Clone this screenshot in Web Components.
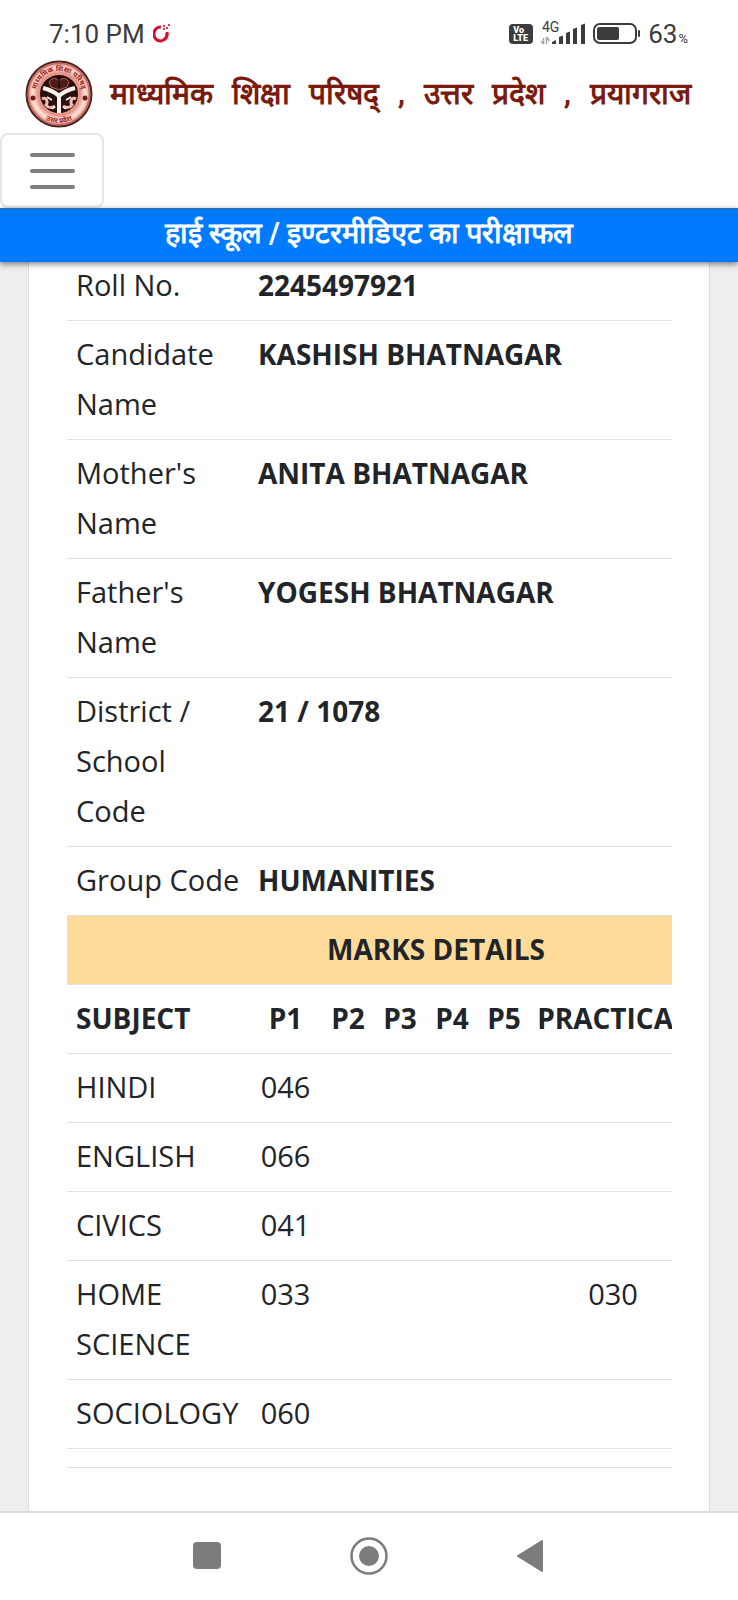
<!DOCTYPE html>
<html lang="hi">
<head>
<meta charset="utf-8">
<meta name="viewport" content="width=device-width, initial-scale=1">
<title>माध्यमिक शिक्षा परिषद्</title>
<style>
    :root {
        --text-color: #212529;
        --status-color: #3c3c3c;
        --brand-color: #7b1b10;
        --primary-color: #007bff;
        --line-color: #dee2e6;
        --page-color: #eeeeee;
        --marks-color: #ffdb99;
        --nav-color: #7c7c7c;
    }

    body {
        margin: 0;
        height: 100vh;
        display: flex;
        flex-direction: column;
        background: var(--page-color);
        color: var(--text-color);
        font-family: "Open Sans", "Noto Sans", sans-serif;
    }

    result-page {
        flex: 1;
        min-height: 0;
    }
</style>
</head>
<body>
    <status-bar></status-bar>
    <board-header></board-header>
    <title-banner>हाई स्कूल / इण्टरमीडिएट का परीक्षाफल</title-banner>
    <result-page><marks-sheet></marks-sheet></result-page>
    <system-nav></system-nav>

<script>
class StatusBar extends HTMLElement {
    constructor() {
        super();
        this.attachShadow({ mode: 'open' });
    }

    connectedCallback() {
        this.shadowRoot.innerHTML = `
            <style>
                :host {
                    display: flex;
                    justify-content: space-between;
                    align-items: center;
                    height: 36px;
                    padding: 16px 50px 6px 49px;
                    background: #fff;
                    color: var(--status-color);
                    font-family: Roboto, sans-serif;
                    font-size: 26px;
                    line-height: 36px;
                }

                .group {
                    display: flex;
                    align-items: center;
                }

                .left { gap: 8px; }
                .right { gap: 7px; }

                svg { display: block; }

                .volte {
                    width: 24px;
                    height: 20px;
                    border-radius: 4px;
                    background: var(--status-color);
                    color: #fff;
                    font: 900 9px/9px Roboto, sans-serif;
                    padding: 2px 0 0 4px;
                    box-sizing: border-box;
                }

                .volte span { display: block; height: 8px; }

                .battery {
                    display: flex;
                    align-items: center;
                    gap: 7px;
                }

                .level {
                    display: flex;
                    align-items: baseline;
                    gap: 1px;
                }

                .percent { font-size: 13px; line-height: 13px; }
            </style>

            <div class="group left">
                <span>7:10 PM</span>
                <svg width="18" height="20" viewBox="0 0 18 20">
                    <path d="M8 3 A6.6 7 0 1 0 14 9" fill="none" stroke="#d4102c" stroke-width="3"/>
                    <path d="M14 8c.5 4-.8 7-4 8" fill="none" stroke="#d4102c" stroke-width="3"/>
                    <path d="M10 1h2v2h-2zM13 3h2v2h-2zM15 0h2v2h-2zM10 4h2v2h-2z" fill="#e0364c"/>
                </svg>
            </div>
            <div class="group right">
                <div class="volte"><span>Vo</span><span>LTE</span></div>
                <svg width="46" height="26" viewBox="0 0 46 26">
                    <text x="2" y="11" font-size="14" fill="#3c3c3c">4G</text>
                    <path d="M3.500 17v6M1 20l2.500 3M6.500 23v-7M6.500 16l3 4" fill="none" stroke="#a5a5a5" stroke-width="1.500"/>
                    <path d="M12 23v-2l4-2v4zM19 23v-7l4-1.500v8.500zM26 23v-11l4-1.500v12.500zM33 23V8l4-1.500V23zM41 23V4l4-1.500V23z" fill="#3c3c3c"/>
                </svg>
                <div class="battery">
                    <svg width="48" height="22" viewBox="0 0 48 22">
                        <rect x="1" y="1" width="42" height="19" rx="6" fill="none" stroke="#3c3c3c" stroke-width="2"/>
                        <rect x="4" y="4" width="22" height="13" rx="2" fill="#3c3c3c"/>
                        <rect x="45" y="7" width="2" height="7" rx="1" fill="#3c3c3c"/>
                    </svg>
                    <div class="level"><span>63</span><span class="percent">%</span></div>
                </div>
            </div>
        `;
    }
}

class BoardEmblem extends HTMLElement {
    constructor() {
        super();
        this.attachShadow({ mode: 'open' });
    }

    connectedCallback() {
        this.shadowRoot.innerHTML = `
            <style>
                :host { display: block; }
                svg { display: block; }
                text {
                    font: 700 7px "Noto Sans", sans-serif;
                    fill: #a01c1c;
                    text-anchor: middle;
                }
            </style>
            <svg width="68" height="68" viewBox="0 0 68 68">
                <defs>
                    <path id="top" d="M11 34a23 23 0 0 1 46 0"/>
                    <path id="bottom" d="M5 34a29 29 0 0 0 58 0"/>
                    <radialGradient id="ring">
                        <stop offset=".6" stop-color="#d9796e"/>
                        <stop offset=".8" stop-color="#ffe3da"/>
                        <stop offset="1" stop-color="#e08a7c"/>
                    </radialGradient>
                </defs>
                <circle cx="34" cy="34" r="32.500" fill="url(#ring)" stroke="#4a2524" stroke-width="2"/>
                <circle cx="34" cy="34" r="30.500" fill="none" stroke="#c9675c" stroke-width="1.500"/>
                <text><textPath href="#top" startOffset="50%">माध्यमिक शिक्षा परिषद्</textPath></text>
                <text><textPath href="#bottom" startOffset="50%">उत्तर प्रदेश</textPath></text>
                <circle cx="8" cy="38" r="2.500" fill="#6d1c1a"/>
                <circle cx="60" cy="38" r="2.500" fill="#6d1c1a"/>
                <circle cx="34" cy="34" r="20" fill="#27100f" stroke="#e79688" stroke-width="2"/>
                <path d="M24 22c4-6 8-3 10-1 2-2 6-5 10 1l-2 5-8 3-8-3z" fill="#4e1b1b" stroke="#b4635a"/>
                <path d="M34 17v11" stroke="#1a0808" stroke-width="1.500"/>
                <path d="M18 28c8 2 12 4 16 8 4-4 8-6 16-8M34 36v17" fill="none" stroke="#fff1ec" stroke-width="4"/>
                <path d="M17 39c5-3 6 4 4 6 2 3 6 3 9 1M51 39c-5-3-6 4-4 6-2 3-6 3-9 1" fill="none" stroke="#f5b9ad" stroke-width="3"/>
                <path d="M22 37l5 3M46 37l-5 3M27 49l3-2M41 49l-3-2" stroke="#fff" stroke-width="1.500"/>
            </svg>
        `;
    }
}

class BoardHeader extends HTMLElement {
    constructor() {
        super();
        this.attachShadow({ mode: 'open' });
    }

    connectedCallback() {
        this.shadowRoot.innerHTML = `
            <style>
                :host {
                    display: block;
                    background: #fff;
                }

                .brand {
                    display: flex;
                    align-items: center;
                    gap: 17px;
                    padding: 2px 47px 5px 25px;
                }

                h1 {
                    flex: 1;
                    display: flex;
                    justify-content: space-between;
                    margin: 0;
                    color: var(--brand-color);
                    font-family: Roboto, sans-serif;
                    font-size: 30px;
                    font-weight: 700;
                    line-height: 64px;
                    white-space: nowrap;
                }

                button {
                    display: flex;
                    flex-direction: column;
                    align-items: center;
                    justify-content: center;
                    gap: 12px;
                    width: 104px;
                    height: 75px;
                    padding: 0;
                    border: 2px solid #e5e5e5;
                    border-radius: 8px;
                    background: #fff;
                }

                button span {
                    width: 45px;
                    height: 4px;
                    border-radius: 2px;
                    background: #7f7f7f;
                }
            </style>

            <div class="brand">
                <board-emblem></board-emblem>
                <h1>${this.renderWords('माध्यमिक शिक्षा परिषद् , उत्तर प्रदेश , प्रयागराज')}</h1>
            </div>
            <button type="button" aria-label="Menu"><span></span><span></span><span></span></button>
        `;
    }

    renderWords(title) {
        return title.split(' ').map(word => `<span>${word}</span>`).join(' ');
    }
}

class TitleBanner extends HTMLElement {
    constructor() {
        super();
        this.attachShadow({ mode: 'open' });
    }

    connectedCallback() {
        this.shadowRoot.innerHTML = `
            <style>
                :host {
                    display: block;
                    position: relative;
                    z-index: 1;
                    border-top: 1px solid #3d6a9c;
                    background: var(--primary-color);
                    box-shadow: 0 2px 6px rgba(0, 0, 0, 0.5);
                    color: #fff;
                    text-align: center;
                }

                h2 {
                    margin: 0;
                    padding-bottom: 5px;
                    font: 700 29px/48px Roboto, sans-serif;
                }
            </style>
            <h2><slot></slot></h2>
        `;
    }
}

class ResultPage extends HTMLElement {
    constructor() {
        super();
        this.attachShadow({ mode: 'open' });
    }

    connectedCallback() {
        this.shadowRoot.innerHTML = `
            <style>
                :host {
                    display: flex;
                    overflow: hidden;
                    padding: 0 28px;
                }

                .card {
                    flex: 1;
                    min-width: 0;
                    padding: 0 37px 0 38px;
                    border: solid #dcdcdc;
                    border-width: 0 1px;
                    background: #fff;
                }
            </style>
            <div class="card"><slot></slot></div>
        `;
    }
}

class MarksSheet extends HTMLElement {
    constructor() {
        super();
        this.attachShadow({ mode: 'open' });
        this.details = [
            ['Roll No.', '2245497921'],
            ['Candidate Name', 'KASHISH BHATNAGAR'],
            ["Mother's Name", 'ANITA BHATNAGAR'],
            ["Father's Name", 'YOGESH BHATNAGAR'],
            ['District / School Code', '21 / 1078'],
            ['Group Code', 'HUMANITIES']
        ];
        this.papers = ['P1', 'P2', 'P3', 'P4', 'P5', 'PRACTICAL', ''];
        this.subjects = [
            ['HINDI', '046', ''],
            ['ENGLISH', '066', ''],
            ['CIVICS', '041', ''],
            ['HOME SCIENCE', '033', '030'],
            ['SOCIOLOGY', '060', '']
        ];
    }

    connectedCallback() {
        this.shadowRoot.innerHTML = `
            <style>
                /* the table is wider than the card; the first row is scrolled under the banner */
                :host {
                    display: block;
                    overflow: hidden;
                    margin-top: -10px;
                }

                table {
                    width: 737px;
                    table-layout: fixed;
                    border-collapse: separate;
                    border-spacing: 0;
                    font-size: 29px;
                    line-height: 50px;
                }

                .subject { width: 182px; }
                .first { width: 73px; }
                .paper { width: 52px; }
                .practical { width: 166px; }

                th, td {
                    padding: 8px 0 10px;
                    border-bottom: 1px solid var(--line-color);
                    font-weight: 400;
                    text-align: center;
                    vertical-align: top;
                }

                th:first-child {
                    padding-left: 9px;
                    padding-right: 8px;
                    text-align: left;
                }

                .value {
                    padding-left: 9px;
                    font-size: 28px;
                    font-weight: 700;
                    text-align: left;
                }

                .heading th {
                    font-size: 28px;
                    font-weight: 700;
                }

                .band th {
                    background: var(--marks-color);
                    text-align: center;
                }
            </style>

            <table>
                <colgroup>
                    <col class="subject"><col class="first">
                    <col class="paper" span="4">
                    <col class="practical"><col>
                </colgroup>
                <tbody>
                    ${this.details.map(([label, value]) => `
                        <tr><th scope="row">${label}</th><td class="value" colspan="7">${value}</td></tr>
                    `).join('')}
                    <tr class="heading band"><th colspan="8">MARKS DETAILS</th></tr>
                    <tr class="heading">
                        <th scope="col">SUBJECT</th>
                        ${this.papers.map(paper => `<th scope="col">${paper}</th>`).join('')}
                    </tr>
                    ${this.subjects.map(([name, first, practical]) => `
                        <tr>
                            <th scope="row">${name}</th><td>${first}</td>
                            <td></td><td></td><td></td><td></td>
                            <td>${practical}</td><td></td>
                        </tr>
                    `).join('')}
                    <tr><td colspan="8"></td></tr>
                </tbody>
            </table>
        `;
    }
}

class SystemNav extends HTMLElement {
    constructor() {
        super();
        this.attachShadow({ mode: 'open' });
    }

    connectedCallback() {
        this.shadowRoot.innerHTML = `
            <style>
                :host {
                    display: block;
                    border-top: 2px solid #dcdcdc;
                    background: #fff;
                }

                nav {
                    display: flex;
                    justify-content: center;
                    height: 87px;
                }

                button {
                    display: flex;
                    align-items: center;
                    justify-content: center;
                    width: 22%;
                    padding: 0 0 2px;
                    border: 0;
                    background: none;
                }

                svg { fill: var(--nav-color); }
            </style>

            <nav>
                <button type="button" aria-label="Recent apps">
                    <svg width="40" height="40" viewBox="0 0 40 40"><rect x="6" y="6" width="28" height="27" rx="4"/></svg>
                </button>
                <button type="button" aria-label="Home">
                    <svg width="40" height="40" viewBox="0 0 40 40">
                        <circle cx="20" cy="20" r="17.500" fill="none" stroke="#7c7c7c" stroke-width="2.500"/>
                        <circle cx="20" cy="20" r="10"/>
                    </svg>
                </button>
                <button type="button" aria-label="Back">
                    <svg width="40" height="40" viewBox="0 0 40 40"><path d="M7 20L31 5v30z" stroke="#7c7c7c" stroke-width="2" stroke-linejoin="round"/></svg>
                </button>
            </nav>
        `;
    }
}

customElements.define('status-bar', StatusBar);
customElements.define('board-emblem', BoardEmblem);
customElements.define('board-header', BoardHeader);
customElements.define('title-banner', TitleBanner);
customElements.define('result-page', ResultPage);
customElements.define('marks-sheet', MarksSheet);
customElements.define('system-nav', SystemNav);
</script>
</body>
</html>
